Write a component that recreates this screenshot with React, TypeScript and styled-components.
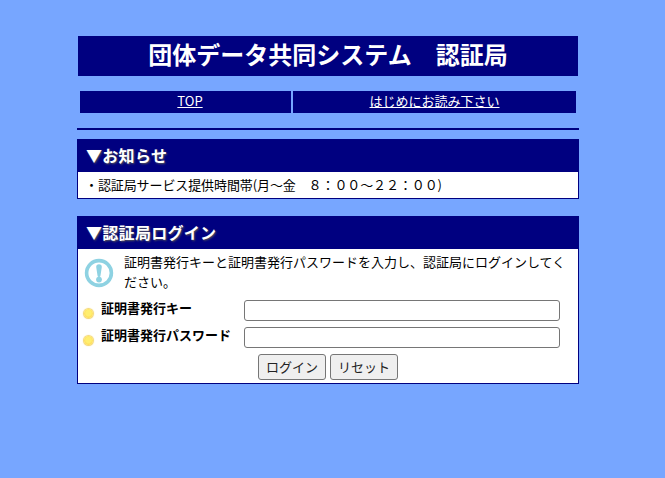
import React from "react";
import styled, { createGlobalStyle } from "styled-components";

const Global = createGlobalStyle`
  html, body { margin: 0; padding: 0; background: #77a6ff; }
  body { font-family: "Noto Sans CJK JP", "Liberation Sans", sans-serif; color: #000; }
`;

const Page = styled.div`
  width: 502px;
  padding: 36px 0 0 77px;
`;

const Title = styled.h1`
  margin: 0 1px;
  height: 40px;
  background: #000080;
  color: #fff;
  font-size: 24px;
  font-weight: 700;
  line-height: 36px;
  text-align: center;
  white-space: pre;
`;

const Nav = styled.nav`
  display: grid;
  grid-template-columns: 211px 283px;
  gap: 2px;
  margin: 15px 3px;
`;

const NavLink = styled.a<{ $inset?: number }>`
  height: 22px;
  padding-left: ${(p) => p.$inset ?? 0}px;
  background: #000080;
  color: #fff;
  font-size: 13px;
  line-height: 20px;
  text-align: center;
  text-decoration: underline;
`;

const Rule = styled.hr`
  height: 2px;
  margin: 0 0 9px;
  border: 0;
  background: #000080;
`;

const Panel = styled.section<{ $gap?: number }>`
  margin-bottom: ${(p) => p.$gap ?? 0}px;
  border: 1px solid #000080;
  background: #fff;
`;

const PanelHead = styled.h2`
  height: 32px;
  margin: 0;
  padding-left: 8px;
  background: #000080;
  color: #fff;
  font-size: 16px;
  font-weight: 700;
  line-height: 30px;
  letter-spacing: 0.3px;
  text-shadow: 1px 1px 2px #555;
`;

const Notice = styled.p`
  margin: 0;
  padding-left: 7px;
  height: 26px;
  font-size: 13px;
  line-height: 25px;
  letter-spacing: -0.1px;
  white-space: pre;
`;

const Intro = styled.div`
  display: flex;
  gap: 10px;
  height: 47px;
  padding: 3px 10px 0 6px;
`;

const IntroText = styled.p`
  margin: 0;
  font-size: 13px;
  line-height: 20px;
`;

const Field = styled.div`
  display: flex;
  align-items: flex-start;
  height: 27px;
  padding-left: 6px;
`;

const Bullet = styled.span`
  flex: none;
  width: 9px;
  height: 9px;
  margin-top: 10px;
  border-radius: 50%;
  background: radial-gradient(circle at 50% 45%, #ffee70 0 40%, #ffdc55 70%, #eec044 100%);
  box-shadow: 0 0 1px 1px #f3d56a;
`;

const Label = styled.label`
  width: 143px;
  margin-left: 8px;
  font-size: 13px;
  font-weight: 700;
  line-height: 18px;
`;

const Input = styled.input`
  box-sizing: border-box;
  width: 316px;
  height: 21px;
  margin-top: 1px;
  padding: 0 4px;
  border: 1px solid #767676;
  border-radius: 3px;
  background: #fff;
`;

const Actions = styled.div`
  display: flex;
  justify-content: center;
  gap: 4px;
  padding: 1px 0 3px;
`;

const Button = styled.button`
  box-sizing: border-box;
  width: 68px;
  height: 26px;
  padding: 0 0 2px;
  border: 1px solid #767676;
  border-radius: 3px;
  background: #efefef;
  color: #222;
  font: 400 13px "Noto Sans CJK JP", sans-serif;
`;

const InfoIcon = () => (
  <svg width="30" height="30" viewBox="0 0 30 30" style={{ flex: "none", marginTop: 6 }}>
    <circle cx="15" cy="15" r="12.4" fill="#fff" stroke="#8ed2e2" strokeWidth="3.6" />
    <path d="M12.2 9a2.8 2.8 0 0 1 5.6 0L16.5 17.6a1.5 1.5 0 0 1-3 0z" fill="#8ed2e2" />
    <circle cx="15" cy="21.6" r="2.9" fill="#8ed2e2" />
  </svg>
);

export default function App() {
  return (
    <>
      <Global />
      <Page>
        <Title>団体データ共同システム　認証局</Title>
        <Nav>
          <NavLink href="#" $inset={9}>TOP</NavLink>
          <NavLink href="#">はじめにお読み下さい</NavLink>
        </Nav>
        <Rule />
        <Panel $gap={17}>
          <PanelHead>▼お知らせ</PanelHead>
          <Notice>・認証局サービス提供時間帯(月～金　８：００～２２：００)</Notice>
        </Panel>
        <Panel>
          <PanelHead>▼認証局ログイン</PanelHead>
          <Intro>
            <InfoIcon />
            <IntroText>証明書発行キーと証明書発行パスワードを入力し、認証局にログインしてください。</IntroText>
          </Intro>
          <Field>
            <Bullet />
            <Label>証明書発行キー</Label>
            <Input type="text" />
          </Field>
          <Field>
            <Bullet />
            <Label>証明書発行パスワード</Label>
            <Input type="password" />
          </Field>
          <Actions>
            <Button type="button">ログイン</Button>
            <Button type="button">リセット</Button>
          </Actions>
        </Panel>
      </Page>
    </>
  );
}
